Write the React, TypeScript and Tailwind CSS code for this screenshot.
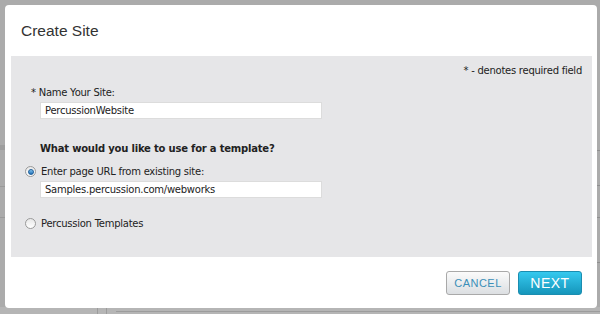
import React from "react";

const body = { fontFamily: '"DejaVu Sans", Verdana, sans-serif' };

function Radio({ checked }: { checked?: boolean }) {
  return (
    <span
      className="inline-flex items-center justify-center w-[11px] h-[11px] rounded-full border border-[#9a9a9a] bg-gradient-to-b from-[#e8e8e8] to-[#ffffff] shrink-0"
    >
      {checked && (
        <span className="w-[6px] h-[6px] rounded-full bg-gradient-to-b from-[#7fc3ef] to-[#1d6fb5] border border-[#1f5f9a]" />
      )}
    </span>
  );
}

export default function App() {
  return (
    <div className="relative w-[600px] h-[314px] bg-[#ababab] overflow-hidden">
      {/* background page hints */}
      <div className="absolute left-0 bottom-0 w-[600px] h-[7px] bg-[#b5b5b5]" />
      <div className="absolute left-[97px] bottom-0 w-[1px] h-[7px] bg-[#9c9c9c]" />
      <div className="absolute left-[106px] bottom-0 w-[1px] h-[7px] bg-[#9c9c9c]" />
      <div className="absolute left-[116px] bottom-[2px] w-[484px] h-[1px] bg-[#9c9c9c]" />
      <div className="absolute left-0 top-[145px] w-[6px] h-[5px] bg-[#9e9e9e]" />
      <div className="absolute left-0 top-[186px] w-[6px] h-[1px] bg-[#9a9a9a]" />
      <div className="absolute left-0 top-[217px] w-[6px] h-[1px] bg-[#9a9a9a]" />
      <div className="absolute right-0 top-[150px] w-[3px] h-[1px] bg-[#8f8f8f]" />
      <div className="absolute right-0 top-[185px] w-[3px] h-[1px] bg-[#8f8f8f]" />
      <div className="absolute right-0 top-[217px] w-[3px] h-[1px] bg-[#8f8f8f]" />
      <div className="absolute right-0 top-[262px] w-[3px] h-[1px] bg-[#8f8f8f]" />

      {/* modal */}
      <div className="absolute left-[5px] top-[5px] w-[592px] h-[303px] bg-white rounded-[4px] flex flex-col">
        <div className="h-[51px] flex items-center pl-[16px] pt-[1px]">
          <span
            className="text-[15.5px] text-[#333333]"
            style={{ fontFamily: '"Liberation Sans", Arial, sans-serif' }}
          >
            Create Site
          </span>
        </div>
        <div
          className="ml-[6px] w-[581px] h-[201px] bg-[#e6e6e8] text-[10px] tracking-[-0.25px] text-[#222222] flex flex-col"
          style={body}
        >
          <div className="flex justify-end pr-[10px] pt-[8px] leading-[13px]">
            * - denotes required field
          </div>
          <div className="pl-[20px] pt-[9px] leading-[13px]">* Name Your Site:</div>
          <div className="pl-[29px] pt-[3px]">
            <div className="w-[282px] h-[17px] bg-white border border-[#dcdcdc] flex items-center pl-[4px]">
              PercussionWebsite
            </div>
          </div>
          <div className="pl-[29px] pt-[23px] font-bold leading-[13px] tracking-[-0.2px]">
            What would you like to use for a template?
          </div>
          <div className="pl-[14px] pt-[10px] flex items-center gap-[5px] leading-[13px]">
            <Radio checked />
            <span>Enter page URL from existing site:</span>
          </div>
          <div className="pl-[29px] pt-[3px]">
            <div className="w-[282px] h-[17px] bg-white border border-[#dcdcdc] flex items-center pl-[4px]">
              Samples.percussion.com/webworks
            </div>
          </div>
          <div className="pl-[14px] pt-[19px] flex items-center gap-[5px] leading-[13px]">
            <Radio />
            <span>Percussion Templates</span>
          </div>
        </div>
        <div className="flex-1 flex justify-end items-start pt-[14px] pr-[15px] gap-[8px]">
          <button
            className="w-[64px] h-[24px] rounded-[3px] border border-[#a9a9a9] bg-gradient-to-b from-[#fbfbfb] to-[#dcdfe2] text-[#3b8fb8] text-[11px] tracking-[0.5px] flex items-center justify-center"
            style={{ fontFamily: '"Liberation Sans", Arial, sans-serif' }}
          >
            CANCEL
          </button>
          <button
            className="w-[64px] h-[24px] rounded-[3px] border border-[#1b8db0] bg-gradient-to-b from-[#35c9ef] to-[#1596bb] text-white text-[14px] tracking-[0.5px] flex items-center justify-center"
            style={{ fontFamily: '"Liberation Sans", Arial, sans-serif' }}
          >
            NEXT
          </button>
        </div>
      </div>
    </div>
  );
}
